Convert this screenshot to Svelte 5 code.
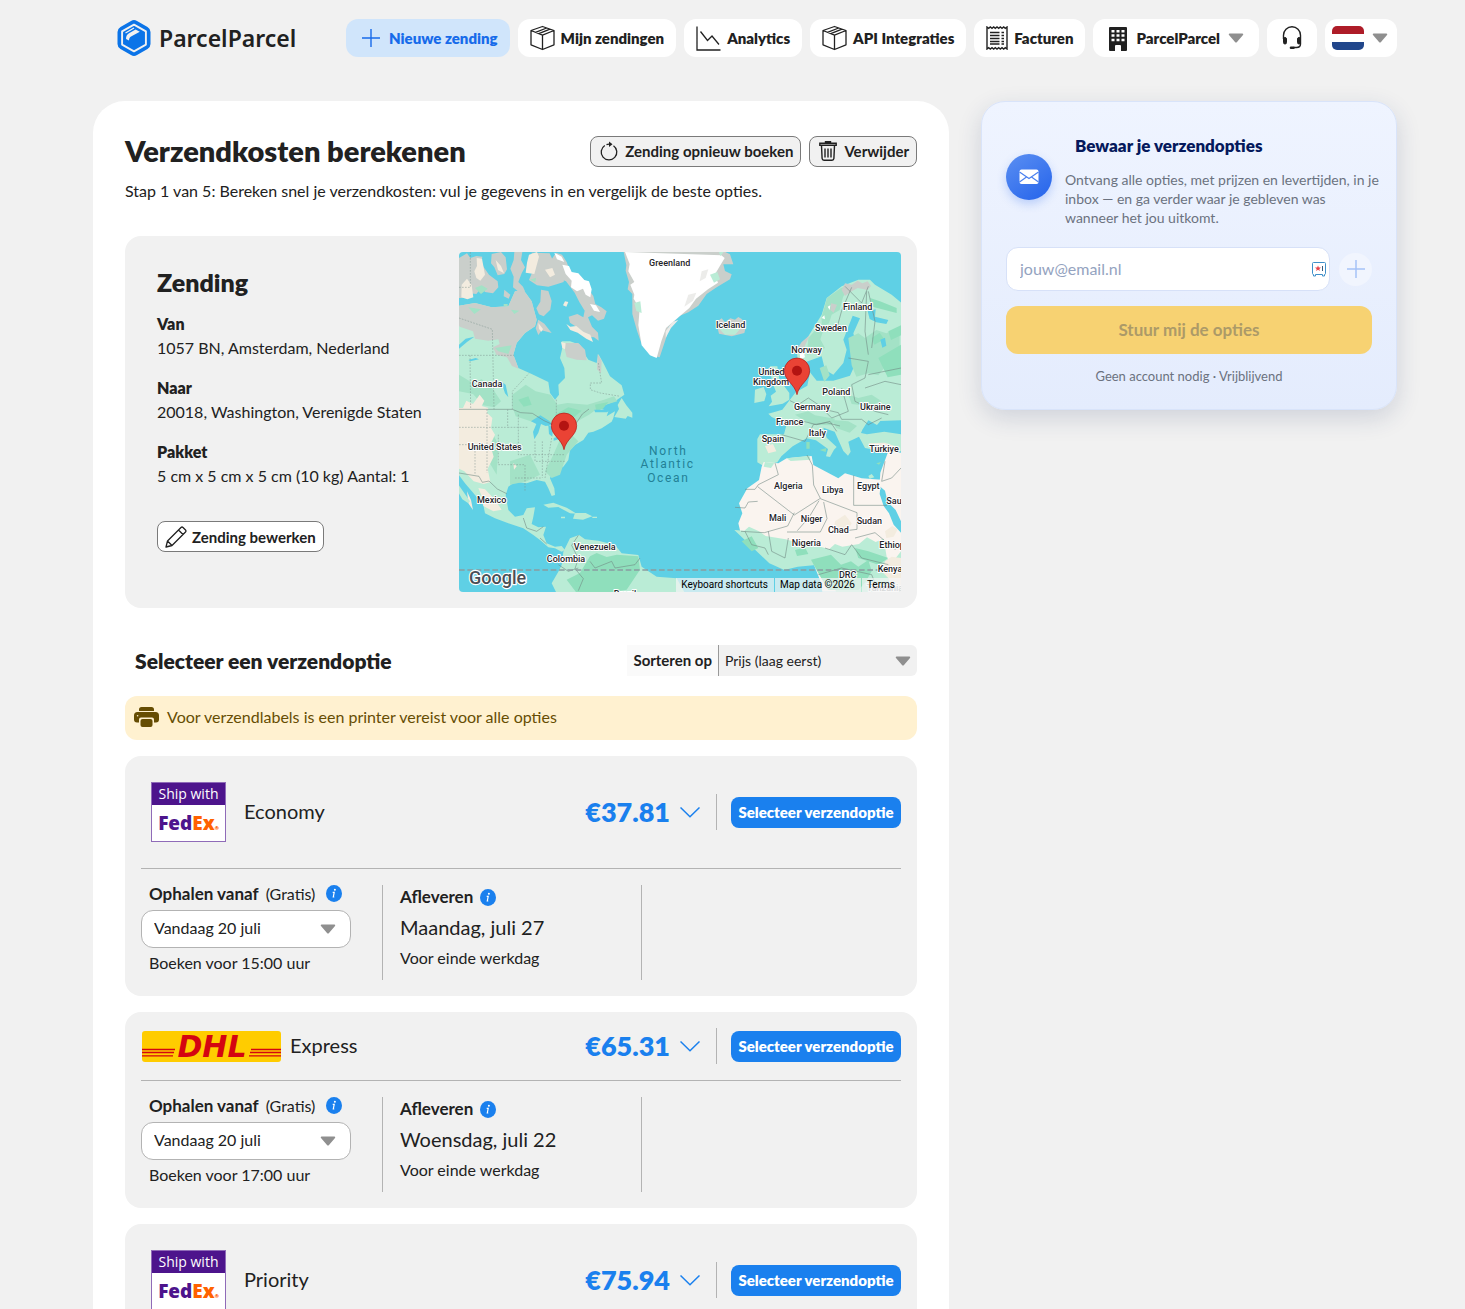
<script lang="ts">
	interface ShippingOption {
		carrier: 'fedex' | 'dhl';
		service: string;
		price: string;
		bookBefore: string;
		delivery: string;
		note: string;
	}

	const options: ShippingOption[] = [
		{
			carrier: 'fedex',
			service: 'Economy',
			price: '€37.81',
			bookBefore: '15:00',
			delivery: 'Maandag, juli 27',
			note: 'Voor einde werkdag'
		},
		{
			carrier: 'dhl',
			service: 'Express',
			price: '€65.31',
			bookBefore: '17:00',
			delivery: 'Woensdag, juli 22',
			note: 'Voor einde werkdag'
		},
		{
			carrier: 'fedex',
			service: 'Priority',
			price: '€75.94',
			bookBefore: '15:00',
			delivery: 'Woensdag, juli 22',
			note: 'Voor einde werkdag'
		}
	];

	const shipment = [
		{ label: 'Van', value: '1057 BN, Amsterdam, Nederland' },
		{ label: 'Naar', value: '20018, Washington, Verenigde Staten' },
		{ label: 'Pakket', value: '5 cm x 5 cm x 5 cm (10 kg) Aantal: 1' }
	];

	// country labels, in map units (3 units per pixel)
	const places: [string, number, number][] = [
		['Greenland', 644, 55],
		['Iceland', 827, 240],
		['Finland', 1208, 187],
		['Sweden', 1128, 250],
		['Norway', 1055, 316],
		['United', 950, 382],
		['Kingdom', 948, 410],
		['Poland', 1144, 442],
		['Germany', 1071, 487],
		['Ukraine', 1261, 487],
		['France', 1004, 532],
		['Italy', 1087, 565],
		['Spain', 954, 583],
		['Türkiye', 1287, 613],
		['Algeria', 1000, 724],
		['Libya', 1133, 736],
		['Egypt', 1240, 724],
		['Saudi', 1328, 768],
		['Mali', 968, 820],
		['Niger', 1070, 823],
		['Sudan', 1243, 828],
		['Chad', 1150, 855],
		['Nigeria', 1054, 895],
		['Ethiopia', 1322, 901],
		['Kenya', 1305, 973],
		['DRC', 1178, 990],
		['Canada', 96, 417],
		['United States', 119, 606],
		['Mexico', 110, 766],
		['Venezuela', 419, 907],
		['Colombia', 333, 943],
		['Brazil', 510, 1046]
	];

	let email = $state('');
	let sort = $state('price');
</script>

{#snippet caret()}
	<svg class="caret" width="16" height="10" viewBox="0 0 16 10" aria-hidden="true">
		<path d="M1.6.5h12.8c.8 0 1.100.8.6 1.400L9 8.900c-.6.7-1.400.7-2 0L1 1.900C.5 1.300.8.5 1.600.5z" fill="#8f8f8f" />
	</svg>
{/snippet}

{#snippet box()}
	<svg width="25" height="26" viewBox="0 0 25 26" fill="none" stroke="#212121" stroke-width="1.300" stroke-linejoin="round" aria-hidden="true">
		<path d="M12.500 1.500 24 5.500v14.300L12.500 24.500 1 19.800V5.500zM1 5.500l11.500 4.600L24 5.500M12.500 10.100v14.400M5.500 7.300l11.200-4.300M8.800 8.600l11.200-4.500" />
	</svg>
{/snippet}

{#snippet info()}
	<svg class="info" width="16" height="17" viewBox="0 0 16 17" role="img" aria-label="Info">
		<ellipse cx="8" cy="8.500" rx="8" ry="8.500" fill="#1a80ee" />
		<circle cx="8.900" cy="4.800" r="1" fill="#fff" />
		<path d="M6.700 7.300h1.500L7.300 12h1" fill="none" stroke="#fff" stroke-width="1.200" />
	</svg>
{/snippet}

{#snippet pin(x: number, y: number)}
	<g transform="translate({x} {y})">
		<path d="M0 0C-6-32-38-42-38-72a38 38 0 0 1 76 0C38-42 6-32 0 0z" fill="#ea4335" stroke="#b31412" stroke-width="2" />
		<circle cy="-72" r="15" fill="#b31412" />
	</g>
{/snippet}

<div class="page">
	<header>
		<a class="brand" href="/">
			<svg width="34" height="36" viewBox="0 0 34 36" aria-hidden="true">
				<path d="M14 .9a6 6 0 0 1 6 0l10.500 6A6 6 0 0 1 33.500 12v12a6 6 0 0 1-3 5.100l-10.500 6a6 6 0 0 1-6 0l-10.500-6a6 6 0 0 1-3-5.100V12a6 6 0 0 1 3-5.100z" fill="#0b74e8" />
				<path d="M17 4.700 28.900 11.400v13.200L17 31.300 5.100 24.600V11.400z" fill="#0b74e8" stroke="#f1f1f1" stroke-width="1.900" stroke-linejoin="round" />
				<path d="M9 19c0-3 1-4.700 3-5.800l6.600-3.700 4.200 2.200-8.300 4.500c-2 1.100-2.300 1.900-2.500 4.300z" fill="#f1f1f1" />
				<path d="m8.500 13 8.500-4.900" stroke="#f1f1f1" stroke-width="1.200" />
			</svg>
			<span>ParcelParcel</span>
		</a>
		<nav>
			<a class="nav-item active" href="#nieuw">
				<svg width="18" height="18" viewBox="0 0 18 18" aria-hidden="true"><path d="M9 0v18M0 9h18" stroke="#176bea" stroke-width="1.400" /></svg>
				Nieuwe zending
			</a>
			<a class="nav-item" href="#zendingen">{@render box()}Mijn zendingen</a>
			<a class="nav-item" href="#analytics">
				<svg width="25" height="25" viewBox="0 0 25 25" fill="none" stroke="#212121" stroke-width="1.300" aria-hidden="true"><path d="M1 .5V24h23.500M4.500 5.500l7 9L16 10l7 8.500" /></svg>
				Analytics
			</a>
			<a class="nav-item" href="#api">{@render box()}API Integraties</a>
			<a class="nav-item" href="#facturen">
				<svg width="22" height="24" viewBox="0 0 22 24" fill="none" stroke="#212121" aria-hidden="true">
					<path d="M1 1l1.700 1.300L4.300 1 6 2.300 7.700 1l1.600 1.300L11 1l1.700 1.300L14.300 1 16 2.300 17.700 1l1.600 1.300L21 1v22l-1.700-1.300-1.600 1.300-1.700-1.300-1.700 1.300-1.600-1.300L11 23l-1.700-1.300L7.700 23 6 21.700 4.300 23l-1.600-1.300L1 23z" stroke-width="1.400" />
					<path d="M4 6.500h9.500M4 9.500h9.500M4 12.500h9.500M4 15.500h9.500M4 18h9.500M15.500 6.500H18M15.500 9.500H18M15.500 12.500H18M15.500 15.500H18M15.500 18H18" stroke-width="1.400" />
				</svg>
				Facturen
			</a>
			<button type="button" class="nav-item account">
				<svg width="20" height="25" viewBox="0 0 20 25" aria-hidden="true">
					<path fill="#212121" fill-rule="evenodd" d="M2 1h16a1 1 0 0 1 1 1v22a1 1 0 0 1-1 1h-5v-5a1 1 0 0 0-1-1H8a1 1 0 0 0-1 1v5H2a1 1 0 0 1-1-1V2a1 1 0 0 1 1-1zm1.500 3v2.500h3V4zm5 0v2.500h3V4zm5 0v2.500h3V4zm-10 4.300v2.500h3V8.300zm5 0v2.500h3V8.300zm5 0v2.500h3V8.300zm-10 4.400v2.500h3v-2.500zm5 0v2.500h3v-2.500zm5 0v2.500h3v-2.500z" />
				</svg>
				ParcelParcel
				{@render caret()}
			</button>
			<button type="button" class="nav-item support" aria-label="Klantenservice">
				<svg width="20" height="24" viewBox="0 0 20 24" fill="none" stroke="#212121" aria-hidden="true">
					<path d="M1.500 13V9.200a8.500 8.500 0 0 1 17 0V18c0 2.500-1.500 3.500-4 3.500h-3" stroke-width="1.400" />
					<rect x="1.500" y="11.500" width="3" height="6.500" rx="1.500" fill="#212121" />
					<rect x="15.500" y="11.500" width="3" height="6.500" rx="1.500" fill="#212121" />
					<path d="M9 21.700h2.500" stroke-width="2.600" stroke-linecap="round" />
				</svg>
			</button>
			<button type="button" class="nav-item language" aria-label="Taal">
				<svg width="32" height="24" viewBox="0 0 32 24" aria-hidden="true">
					<clipPath id="flag"><rect width="32" height="24" rx="5" /></clipPath>
					<g clip-path="url(#flag)">
						<path fill="#fff" d="M0 0h32v24H0z" />
						<path fill="#ae1c28" d="M0 0h32v8H0z" />
						<path fill="#21468b" d="M0 16h32v8H0z" />
					</g>
				</svg>
				{@render caret()}
			</button>
		</nav>
	</header>

	<div class="columns">
		<main>
			<div class="heading">
				<h1>Verzendkosten berekenen</h1>
				<div class="actions">
					<button type="button" class="small-btn">
						<svg width="18" height="20" viewBox="0 0 18 20" fill="none" stroke="#212121" stroke-width="1.300" aria-hidden="true">
							<path d="M4.800 4.500A7.800 7.800 0 1 0 13.500 4.700M10 3.200Q8 3 6.500 3.600" />
							<path d="M9 .5l3.500 2.700L9 6z" fill="#212121" stroke="none" />
						</svg>
						Zending opnieuw boeken
					</button>
					<button type="button" class="small-btn">
						<svg width="18" height="20" viewBox="0 0 18 20" fill="none" stroke="#212121" stroke-width="1.400" aria-hidden="true">
							<path d="M6.500 2V.8h5V2M.8 2.300h16.400v2H.8zM2.500 4.500l.6 13a2 2 0 0 0 1.900 1.800h8a2 2 0 0 0 1.900-1.800l.6-13M6 7.500v9M9 7.500v9M12 7.500v9" />
						</svg>
						Verwijder
					</button>
				</div>
			</div>
			<p class="intro">Stap 1 van 5: Bereken snel je verzendkosten: vul je gegevens in en vergelijk de beste opties.</p>

			<section class="shipment">
				<div class="summary">
					<h2>Zending</h2>
					<dl>
						{#each shipment as row}
							<div>
								<dt>{row.label}</dt>
								<dd>{row.value}</dd>
							</div>
						{/each}
					</dl>
					<button type="button" class="small-btn edit">
						<svg width="22" height="22" viewBox="0 0 22 22" fill="none" stroke="#212121" stroke-width="1.300" stroke-linejoin="round" aria-hidden="true">
							<path d="M1 21l1.500-6L16 1.500a1.500 1.500 0 0 1 2 0L20.500 4a1.500 1.500 0 0 1 0 2L7 19.500zM13.500 4l4.500 4.500M2.500 15 7 19.500" />
						</svg>
						Zending bewerken
					</button>
				</div>

				<div class="map">
					<svg viewBox="12 12 1326 1020" preserveAspectRatio="xMidYMid slice" role="img" aria-label="Kaart">
						<path fill="#5fd0e5" d="M0 0h1350v1040H0z" />

						<!-- North America -->
						<path fill="#baecd6" d="M0 175 60 165l50 13 50-3 20-45 25-5 25 35 15 55-5 20-30 20-25 30-10 35 15 40 40 18 50 24 5 33 15 20 12-15-2-30 20-20-2-30-13-30 7-30-2-20h25l30 10 15 30 10 15 25 10 5-27 15 27 20 40 35 27 8 28-28 20-40 15-25 5-20 20 35-20 30 10-5 15 25-15-5 20-5 11-30 20-25 10-15 3-15 22-25 15-15 15-5 30-15 20-35 20-5 15 13 30 2 20-10 3-10-23-10-20-25-5-30 10-35-5-20 15-8 25 8 45 20 20 25-5 10-20 25-3-5 28-5 22 20 10 23-2-8 25 10 25 25 10 20-2 10 12-10 5-20-10-20-3-25-22-20-15-30-20-45-15-40-15-30-15-5-25-25-30-30-35L0 665z" />
						<path fill="#cacfcb" d="M0 175l60-10 50 13 50-3 20-45 25-5 25 35 15 55-5 20-30 20-25 30-10 35 16 42-20-8-15-26-32-8-10-22 20-10-4-14-30 4-40-6-6-22-40-14L0 205zM325 285l45 0 20 20 5 32-30-2-30-8zM428 318l12 20-2 38-12-12z" />
						<path fill="#a3e2c6" d="M172 440l40-30 30 20 45 10 20 30 30-5 60 5 50-15 30-10 10 15-50 15-35 25-35 20-25 25-55-20-60-5-45-15-10-30zM12 380l40 24 28-10 34 30 24 36-20 18-34-6-30-34-42-8zM330 540l20 20 20 20-35 40-20 60-25 10-20-20 25-50zM100 530l30 60-5 90-30-50zM165 640l60-20 30 60-40 20-50 10z" />
						<path fill="#8fdfbc" d="M190 455l30-10 10 25-24 6zM300 500l40-22 40 10-30 26-30 12zM420 470l40-8-16 20-20 8z" />
						<path fill="#f3ecdf" d="M24 480l10-22 20 10 20-28 14 18-8 16 20 6-4 14 16 16-4 30 12 20-14 30 10 36-18 36 8 40-20 6-30-8-28-30-16-8V480zM70 720l20 4 30 31 20 30-25 5-30-16-5-30zM175 645l10 10-8 10zM36 730l12 26 6 30-14-20z" />
						<path fill="#baecd6" d="M0 695l45 65-5 6-18-12L0 715zM500 450l14 22 18 22 0 15-14-5-6 8-34-5 14-24-4-12zM265 770l30-6 40 15 30 18-20-1-35-19-30 2zM360 795l32 0 20 10-28 10-30-3zM318 806h12v5h-12zM412 806h14v4h-14z" />

						<!-- Arctic islands -->
						<path fill="#cacfcb" d="M12 30l24-14 10 14 18-6 18 2-4 20 24 34 26 20 2 18-16 18-24-4-10-14-16 20-20-2-22 14H12zM110 18l28-6 14 16 4 36-8 14-20 4-10-24-10-12zM178 12h24l-4 24 12 22-10 18-10 26 14 14 6 14-18 2-18-14 2-32-10-24 10-26zM148 125l18 15-5 12-15-7zM230 14l54 2 12 26 8 22 24 14-2 24-26 8-20 6-34-4-24-16 10-24zM258 125l22 4 10 30-4 26-20 20-14-6-8-18 12-20zM250 215l18 12 22 28-30-8-10 14-8-20zM303 14l18 6 14 22 10 28 18 14 24 20 28 40 6 24 18 10 16 12-8 22-18 6-18-16-12 6 12 28 18 18 2 24-14-10-18-2-24-22-30-20-4-18 26-8 18 10 4-20-16-26-14-28-26-34-34-14-18-26 5-20z" />
						<path fill="#f3ecdf" d="M20 110l16-18 14 20 5 36-18 6-18-6zM65 30l16 2 9 48-14 18-12-8-6-20 8-16zM122 36l16 18 9 22-18-10zM222 20l24-8 6 14-14 52-26-4 4-30zM270 65l22-5 8 20-15 8zM330 160l10 2-6 14-10-4zM250 225l14 18-4 8-8-8zM318 282l14 4-2 18-8-4zM334 228l12 8 18-2 22 18 20 8 8 22-20-10-26-18-22-8z" />
						<path fill="#fff" d="M298 14l22 12 8 16-22-8zM322 50l20 4 8 18 20 4 18 20 14 4 8 24-4 24-14-8-8-18-18 8-18-12 2-20-18-20zM405 168l18 4 12 20-18-4z" />
						<path fill="#a3e2c6" d="M60 120l20-8 18 10-20 16zM225 95l18-6-2 14zM168 185l25 3-15 10zM40 178l38 6-20 14zM120 300l50-8-10 26-30-8zM146 168h12v6h-12z" />
						<path fill="#5fd0e5" d="M12 290l20-18 26-6-22 16-24 20zM138 400l14 10 8 38-10-12zM100 155l10-14 6 14zM40 336l22-6 10 4-26 6z" />
						<path fill="#5fd0e5" d="M228 520l28-18 26 16 12 12-22 4-14-6-8 26-12 20-4-22 10-24zM280 532l14 6-2 28-10-8zM296 570l28-8-8 10-20 6zM418 485l48 0-10 8-36 0z" />

						<!-- Greenland and Iceland -->
						<path fill="#cacfcb" d="M506 12l8 40-2 16 10 34-4 22 14 14 0 60 14 50 14 40 32 36 22 4 20-60 6-30 35-35 25-10 30-20 25-35 30-20 40-24 5-15-20-10-5-20 30 0-10-30-20-10 45-23z" />
						<path fill="#fff" d="M510 12l14 36-4 22 18 32-12 8 12 30-2 12 18 30-4 50 10 60 25 30 20 8 14-50 14-40 25-22 45-38 20-28 36-28 30-20-10-24 30-50-10-8z" />
						<path fill="#ececea" d="M700 140l24-6-10 24-26 18zM740 70l20-6-8 26-18 10zM632 250l20-28 18-6-22 24-16 30z" />
						<path fill="#baecd6" d="M538 165l18-5 4 35-16-6zM765 80l22-8 8 22-18 10zM792 12l14 0-10 12z" />
						<path fill="#cacfcb" d="M782 217l10 0 8-6 10 12 16-12 14 4 10-8 10 6 14 18-6 24-38 10-38-8z" />
						<path fill="#baecd6" d="M790 240l66 2-16 18-30 0z" />

						<!-- Europe -->
						<path fill="#baecd6" d="M1030 350l-5-40 35-45 40-65 15-50 45-35 50-20 35 0 15 15 50 30 30 25V610h-60l-50-10-18-34-32 15 7 30-8 12-14-14-26-58-34-12 10 30 30 28-8 8-12 22-12-2 6-22-36-26-28-6-42 24-34 30-12 18-40 12-20-12 0-70 8-14h72l8-30-45-22-10-10 42-12 40-52 35-20 8-40 20 25 50 0 50-15 20-45-10-20 50-12-40-10-10-40 20-45-22-8-28 72 10 30-10 40-30 35-25-15-10-40z" />
						<path fill="#a3e2c6" d="M1100 206l16-56 42-30 22-6-16 34-10 38-24 14-8 26-22 12zM1060 270l30-34 16 8-10 30 14 26-24 14-30 6zM1094 360l20-8 10 30-16 20zM1180 270l30-14 20 14 34-24 30 10 40-18v100l-40 14-24 30-30-6-36 10-14-34zM1020 500l40-10 20 12 60 10-10 20-60-2zM1130 516l50 4 26 14-22 20-40-14zM1180 440l30 10 40-10 30 20-40 14-50-6z" />
						<path fill="#8fdfbc" d="M1245 150l30 10 50 20 0 15-70-18zM1270 330l68-40v90l-40 8zM1250 270l24-16 14 20-30 16zM1300 250l38-18v30l-30 14z" />
						<path fill="#cacfcb" d="M1160 126l10-20 20 4 18-12 14 8 16-6 10 14-10 12-30-6-22 12-16 12zM1020 312l20-30 24-20-20 44zM938 360l18-2-4 14zM1128 166l18 4-10 24-10-8z" />
						<path fill="#fff" d="M1034 316l12-6 4 18-14 6zM1100 210l8-8 2 12zM1118 176l8-4-2 14z" />
						<path fill="#baecd6" d="M945 355l22 0 6 40 30 40 0 20-20 12-42 8 10-14-4-18 16-12-12-30zM900 425l26-8 8 22-6 20-30 6z" />
						<path fill="#5fd0e5" d="M1238 190l24-6-2 22 40 10-6 12-30-5-20-10zM1222 545l18-28 26 14 10-12 62-2v42l-50-8-52 8-18-4zM1276 275l14-6 4 24-12 6zM1064 592l12-6 2 20-12-2zM1066 630h10v-24h-10z" />
						<path fill="#8fdfbc" d="M1054 582h10v20h-10zM1094 606l20-6-2 12zM1264 646l14-4-6 8z" />
						<path fill="#f3ecdf" d="M930 594l24-6 10 22-24 6zM1240 586l50-2 40 14-14 10-60-6z" />

						<!-- Africa and Middle East -->
						<path fill="#faf4ef" d="M1300 610l38 4v240l-20-20-28-70-16-60 2-30zM926 642l44 4 25-15 75-7 5 27 75 40 20-15 50 15 60 4 5 22 2 10 18 34 25 70 20 30v170h-248l-5-30-20-50 0-25-25-10-25-15-55 5-40 10-45-20-30-40-7-30 12-30-10-30 25-45 35-25 8-40z" />
						<path fill="#5fd0e5" d="M1276 716l14 12 8 34 24 24 16 34v34l-22-24-14-34-16-22-12-36z" />
						<path fill="#baecd6" d="M930 642l28 4-10 14-22-4zM995 631l68-8 4 12-60 4zM838 846l30 2 14-12 30 14 20 14 60 10 40 12 50 6 40 12 18-16 22 8 50-8 24-20 26 14 24-10 10 60 20 6 22-28 20 10v36l-60 50-30 50h-115l-20-50 0-30-25-10-25-15-55 5-40 10-45-20zM1240 684l10-6 8 10-14 4z" />
						<path fill="#8fdfbc" d="M1068 935l60-15 30 30 30-10 22 16 30-20 10 34-20 34-20 22h-90l-30-50zM860 880l30-15 20 35-20 10zM1200 900l40 10 60 20-30 20-60-20zM1020 906l30-8 10 20-34 6z" />
						<path fill="#f3ecdf" d="M1290 940l20-14 28 4v102h-40l4-40-20-20zM1140 820l30-20 20 26-14 24-40-6zM1290 850l22-16 16 10-12 22-22 4z" />

						<!-- South America -->
						<path fill="#baecd6" d="M325 911l20-40 27-10 18 13 40 4 50 13 20 25 50 5 10 35 45 30 60 5 25 45H305l-15-30 20-35 10-20z" />
						<path fill="#8fdfbc" d="M405 925l20-10 30 12 30-7 65 5 5 40-40 60-60 10-90 0-30-40 40-20z" />

						<!-- borders -->
						<g fill="none" stroke="#6f8681" stroke-width="1.700">
							<path d="M12 484h160l25 10 35 2 35 22 45 20 30 20 40-60 20-15M12 675l60 10 10 18 20-4 25 24 28 14M205 810l10 30 30 10 20-14M255 870l20 18M370 862l-20 30 20 40-10 30 25 30-15 36M405 940l15 20 50-20 10 20 60-10 15-20M310 950l30 20 30-10" />
							<path d="M1190 118l-30 70-15 55M1170 115l50 50 20-50M1240 130l20 90-10 80M1235 130l-5 120 10 70M1180 330l60 10-10 50-40 20 10 50 60 30 40 10M1160 420l20 70-50 20-40-40-30-20-30 20-25-12M1090 480l60 14 10 20 60 0 20 16 40-20M980 560l70 20 25-50 40-6 40 10M1045 520l40 10 40-10 20 30M1230 420l60-20 48 10M1240 380l98-20" />
							<path d="M960 645l10 35-60 30-10 14h-30M908 716l110 85 78-50-20-40-4-60-16-30M1018 794l-20 40-70 20-70-4M1092 758l-30 50-35 40M1096 752l110 42 0 50-80 10M1196 682v90h100M1106 762l10 50-20 40-100 0M840 778l30 2 10-18 28-2M1200 870l60-16 60 50 18-10M1110 900l60 20 20-30 30 40 80 20M940 850l10 60 40 20 10-60M870 850l20 40 40 10 10 20M1290 640l-10 60 30-10 28-30M1090 980l70-20 90 20 20 50" />
						</g>
						<path fill="none" stroke="#7d938d" stroke-width="1.500" stroke-dasharray="5 4" d="M12 210l100 34 5 240M12 322h165M45 322l2 160M172 484v-54l50-54M304 455v60M46 12v106h-34M96 484v190M158 484v54h60M12 538h146M12 590h190M190 500v120h140M60 600v80M130 560v90h80v80M240 580v60h90M262 580v110M290 570l-20 120M180 690h80M430 345l10 60-34 0 0 20 30 10 60 10" />
						<path fill="none" stroke="#8b9ca0" stroke-width="4" stroke-dasharray="17 8" d="M12 966h1326" />

						<g class="ocean">
							<text x="640" y="620">North</text>
							<text x="638" y="661">Atlantic</text>
							<text x="640" y="702">Ocean</text>
						</g>
						<g class="places">
							{#each places as [name, x, y]}
								<text {x} {y}>{name}</text>
							{/each}
							<text class="faint" x="1290" y="1029">Tanzania</text>
						</g>
						{@render pin(327, 605)}
						{@render pin(1026, 440)}
						<text class="google" x="42" y="1008">Google</text>
					</svg>
					<div class="map-legal">
						<span>Keyboard shortcuts</span>
						<span>Map data ©2026</span>
						<a href="#terms">Terms</a>
					</div>
				</div>
			</section>

			<div class="options-head">
				<h3>Selecteer een verzendoptie</h3>
				<div class="sort">
					<label for="sort">Sorteren op</label>
					<div class="select">
						<select id="sort" bind:value={sort}>
							<option value="price">Prijs (laag eerst)</option>
							<option value="speed">Snelheid</option>
						</select>
						{@render caret()}
					</div>
				</div>
			</div>

			<div class="notice">
				<svg width="25" height="20" viewBox="0 0 25 20" fill="#664d03" aria-hidden="true">
					<path d="M7.500 0h10a2.500 2.500 0 0 1 2.500 2.500V4H5V2.500A2.500 2.500 0 0 1 7.500 0z" />
					<path d="M3.500 5h18A3.500 3.500 0 0 1 25 8.500v4a3 3 0 0 1-3 3h-2V12.500a2 2 0 0 0-2-2H7a2 2 0 0 0-2 2v3H3a3 3 0 0 1-3-3v-4A3.500 3.500 0 0 1 3.500 5z" />
					<rect x="6.500" y="12" width="12" height="8" rx="2" />
					<circle cx="3.600" cy="8.700" r=".8" fill="#fff1d0" />
				</svg>
				<span>Voor verzendlabels is een printer vereist voor alle opties</span>
			</div>

			{#each options as option, i}
				<article class="option">
					<div class="option-top">
						{#if option.carrier === 'fedex'}
							<div class="fedex">
								<span class="ship">Ship with</span>
								<span class="fedex-name"><b>Fed</b><b class="ex">Ex</b><small>®</small></span>
							</div>
						{:else}
							<svg class="dhl" width="139" height="31" viewBox="0 0 139 31" role="img" aria-label="DHL">
								<rect width="139" height="31" rx="3" fill="#fc0" />
								<path d="M0 18.500h33M0 21.500h32M0 24.800h31M109 18.500h30M108 21.500h31M107 24.800h32" stroke="#d40511" stroke-width="1.300" />
								<text x="70" y="26" text-anchor="middle">DHL</text>
							</svg>
						{/if}
						<span class="service">{option.service}</span>
						<button type="button" class="price">
							{option.price}
							<svg width="20" height="11" viewBox="0 0 20 11" fill="none" stroke="#1a80ee" stroke-width="1.500" aria-hidden="true"><path d="M.5.5 10 9.700 19.500.5" /></svg>
						</button>
						<div class="choose">
							<button type="button">Selecteer verzendoptie</button>
						</div>
					</div>
					<div class="option-body">
						<div class="pickup">
							<div class="label-row">
								<label for="pickup-{i}">Ophalen vanaf</label>
								<span>(Gratis)</span>
								{@render info()}
							</div>
							<div class="select">
								<select id="pickup-{i}">
									<option>Vandaag 20 juli</option>
								</select>
								{@render caret()}
							</div>
							<p>Boeken voor {option.bookBefore} uur</p>
						</div>
						<div class="delivery">
							<div class="label-row"><strong>Afleveren</strong>{@render info()}</div>
							<p class="date">{option.delivery}</p>
							<p>{option.note}</p>
						</div>
					</div>
				</article>
			{/each}
		</main>

		<aside>
			<div class="save-head">
				<div class="mail">
					<svg width="20" height="16" viewBox="0 0 20 16" aria-hidden="true">
						<rect x=".5" y=".5" width="19" height="14.500" rx="2" fill="#fff" />
						<path d="M.5 3 10 9.500 19.500 3M.5 13l7-5M19.500 13l-7-5" fill="none" stroke="#4a80ef" stroke-width="1.200" />
					</svg>
				</div>
				<div class="save-text">
					<h4>Bewaar je verzendopties</h4>
					<p>Ontvang alle opties, met prijzen en levertijden, in je inbox — en ga verder waar je gebleven was wanneer het jou uitkomt.</p>
				</div>
			</div>
			<div class="email-row">
				<div class="email">
					<input type="email" placeholder="jouw@email.nl" aria-label="E-mailadres" bind:value={email} />
					<svg width="14" height="15" viewBox="0 0 14 15" fill="none" stroke="#3f8fc9" aria-hidden="true">
						<path d="M1.500.5h11a1 1 0 0 1 1 1v10a1 1 0 0 1-1 1v1.500h-2V12.500h-7V14h-2v-1.500a1 1 0 0 1-1-1v-10a1 1 0 0 1 1-1z" />
						<path d="M10.500 4v5" stroke="#35597a" />
						<path d="m6 3.500.8 2 2.200.1-1.700 1.300.6 2.100L6 7.800 4.100 9l.6-2.100L3 5.600l2.200-.1z" fill="#e8404a" stroke="none" />
					</svg>
				</div>
				<button type="button" class="add" aria-label="E-mailadres toevoegen" disabled>
					<svg width="18" height="18" viewBox="0 0 18 18" aria-hidden="true"><path d="M9 0v18M0 9h18" stroke="#a5c2f7" stroke-width="1.500" /></svg>
				</button>
			</div>
			<button type="button" class="send" disabled>Stuur mij de opties</button>
			<p class="fine">Geen account nodig · Vrijblijvend</p>
		</aside>
	</div>
</div>

<style>
	:global(body) {
		background: #f1f1f1;
		color: #212121;
		font: 16px/24px Lato, sans-serif;
	}

	.page,
	.page :global(*) {
		box-sizing: border-box;
	}

	.page {
		padding: 19px 68px 0 93px;
	}

	h1,
	h2,
	h3,
	h4,
	p,
	dl,
	dd {
		margin: 0;
	}

	button,
	select,
	input {
		font: inherit;
		color: inherit;
	}

	button {
		padding: 0;
		border: none;
		background: none;
		cursor: pointer;
	}

	svg {
		flex-shrink: 0;
	}

	header {
		display: flex;
		align-items: center;
		justify-content: space-between;
		padding-left: 24px;
		margin-bottom: 44px;
	}

	.brand {
		display: flex;
		align-items: center;
		gap: 8px;
		color: #212121;
		font: 600 23px/36px 'Noto Sans', sans-serif;
		text-decoration: none;
	}

	nav {
		display: flex;
		gap: 8px;
	}

	.nav-item {
		display: flex;
		align-items: center;
		gap: 6px;
		height: 38px;
		padding: 0 12px;
		border-radius: 12px;
		background: #fff;
		color: #212121;
		font-size: 15px;
		font-weight: 800;
		text-decoration: none;
		white-space: nowrap;
	}

	.nav-item.active {
		gap: 9px;
		padding: 0 12px 0 16px;
		background: #d0e5fb;
		color: #176bea;
	}

	.nav-item.account {
		gap: 8px;
		padding: 0 15px;
	}

	.nav-item.support {
		padding: 0 15px;
	}

	.nav-item.language {
		gap: 8px;
		padding: 0 9px 0 7px;
	}

	.columns {
		display: grid;
		grid-template-columns: minmax(0, 1fr) 416px;
		align-items: start;
		gap: 32px;
	}

	main {
		padding: 32px;
		border-radius: 32px 32px 0 0;
		background: #fff;
	}

	.heading {
		display: flex;
		align-items: center;
		justify-content: space-between;
		height: 36px;
	}

	h1 {
		font-size: 29px;
		font-weight: 800;
		line-height: 34px;
	}

	.actions {
		display: flex;
		gap: 8px;
	}

	.small-btn {
		display: flex;
		align-items: center;
		gap: 7px;
		height: 31px;
		padding: 0 7px 0 9px;
		border: 1px solid #7a7a7a;
		border-radius: 8px;
		background: #f1f1f1;
		font-size: 15px;
		font-weight: 700;
		white-space: nowrap;
	}

	.intro {
		margin: 10px 0 33px;
	}

	.shipment {
		display: flex;
		justify-content: space-between;
		gap: 16px;
		padding: 16px 16px 16px 32px;
		border-radius: 16px;
		background: #f1f1f1;
	}

	h2 {
		margin: 14px 0 14px;
		font-size: 25px;
		font-weight: 800;
		line-height: 32px;
	}

	dl div {
		margin-bottom: 16px;
	}

	dt {
		font-weight: 800;
	}

	.edit {
		margin-top: 33px;
		padding: 0 7px;
		gap: 5px;
		background: #fff;
	}

	.map {
		position: relative;
		flex: 0 1 442px;
		height: 340px;
		border-radius: 4px;
		overflow: hidden;
	}

	.map > svg {
		display: block;
		width: 100%;
		height: 100%;
	}

	.map text {
		font-family: Roboto, sans-serif;
		text-anchor: middle;
	}

	.places text {
		font-size: 27px;
		font-weight: 500;
		fill: #1f2429;
		stroke: #fff;
		stroke-width: 6px;
		stroke-linejoin: round;
		paint-order: stroke;
	}

	.places .faint {
		fill: #8a9094;
	}

	.ocean text {
		font-size: 36px;
		letter-spacing: 5px;
		fill: #238096;
	}

	.map .google {
		font-size: 54px;
		font-weight: 500;
		text-anchor: start;
		fill: #4a4f55;
		stroke: #fff;
		stroke-width: 7px;
		paint-order: stroke;
	}

	.map-legal {
		position: absolute;
		right: 0;
		bottom: 0;
		display: flex;
		gap: 1px;
		font: 10px/14px Roboto, sans-serif;
		color: #000;
	}

	.map-legal > * {
		padding: 0 6px 0 5px;
		background: rgba(245, 245, 245, 0.7);
		color: inherit;
		text-decoration: none;
	}

	.options-head {
		display: flex;
		align-items: center;
		justify-content: space-between;
		margin: 37px 0 20px;
		padding-left: 10px;
	}

	h3 {
		font-size: 21px;
		font-weight: 800;
	}

	.sort {
		display: flex;
		font-size: 14px;
		line-height: 31px;
	}

	.sort label {
		padding: 0 6px;
		background: #fafafa;
		font-size: 15px;
		font-weight: 700;
	}

	.select {
		display: grid;
		align-items: center;
	}

	.select select {
		grid-area: 1 / 1;
		width: 100%;
		appearance: none;
	}

	.select :global(.caret) {
		grid-area: 1 / 1;
		justify-self: end;
		margin-right: 15px;
		pointer-events: none;
	}

	.sort .select {
		width: 199px;
	}

	.sort .select :global(.caret) {
		margin-right: 6px;
	}

	.sort select {
		height: 31px;
		padding: 0 6px;
		border: none;
		border-left: 1px solid #999;
		border-radius: 0 6px 6px 0;
		background: #f1f1f1;
	}

	.notice {
		display: flex;
		align-items: center;
		gap: 8px;
		height: 44px;
		padding: 0 9px 2px;
		border-radius: 12px;
		background: #fff1d0;
		color: #664d03;
	}

	.option {
		margin-top: 16px;
		padding: 16px;
		border-radius: 16px;
		background: #f1f1f1;
	}

	.option-top {
		display: flex;
		align-items: center;
		min-height: 36px;
		padding-bottom: 16px;
		border-bottom: 1px solid #b3b3b3;
	}

	.fedex {
		width: 75px;
		height: 60px;
		margin: 10px;
		border: 1px solid #8f6bb8;
		background: #fff;
		text-align: center;
	}

	.fedex span {
		display: block;
	}

	.fedex .ship {
		background: #4d148c;
		color: #fff;
		font: 14px/22px 'Open Sans', sans-serif;
	}

	.fedex-name {
		font: 800 19px/36px 'Open Sans', sans-serif;
		color: #4d148c;
	}

	.fedex-name b {
		font-weight: 800;
	}

	.fedex-name .ex,
	.fedex-name small {
		color: #ff6200;
	}

	.fedex-name small {
		font-size: 5px;
	}

	.dhl {
		margin: 0 1px;
	}

	.dhl text {
		font: italic bold 30px 'DejaVu Sans', sans-serif;
		fill: #d40511;
	}

	.service {
		flex: 1;
		padding: 0 0 2px 8px;
		font-size: 20px;
	}

	.price {
		display: flex;
		align-items: center;
		gap: 10px;
		margin-right: 16px;
		color: #1a80ee;
		font-size: 27px;
		font-weight: 800;
		line-height: 36px;
	}

	.choose {
		display: flex;
		align-items: center;
		height: 36px;
		padding-left: 14px;
		border-left: 1px solid #b3b3b3;
	}

	.choose button {
		width: 170px;
		height: 31px;
		border-radius: 8px;
		background: #1a80ee;
		color: #fff;
		font-size: 15px;
		font-weight: 800;
	}

	.option-body {
		display: flex;
		height: 95px;
		margin-top: 16px;
	}

	.label-row {
		display: flex;
		align-items: center;
		gap: 7px;
	}

	.pickup {
		width: 242px;
		padding-right: 31px;
		border-right: 1px solid #b3b3b3;
	}

	.pickup .label-row {
		height: 17px;
		margin-bottom: 8px;
		padding-left: 8px;
	}

	.pickup .label-row :global(.info) {
		margin-left: 4px;
	}

	.pickup label,
	.label-row strong {
		font-size: 17px;
		font-weight: 700;
	}

	.pickup select {
		height: 38px;
		padding: 0 12px 2px;
		border: 1px solid #b3b3b3;
		border-radius: 12px;
		background: #fff;
	}

	.pickup p {
		padding: 3px 8px 0;
	}

	.delivery {
		width: 259px;
		padding-left: 17px;
		border-right: 1px solid #b3b3b3;
	}

	.delivery .date {
		margin: 4px 0 5px;
		font-size: 20px;
		line-height: 28px;
	}

	aside {
		padding: 32px 24px 21px;
		border: 1px solid #d9e4fa;
		border-radius: 24px;
		background: linear-gradient(#eff4ff, #e4ecfd);
		box-shadow: 0 8px 24px rgba(30, 50, 100, 0.16);
	}

	.save-head {
		display: flex;
		gap: 13px;
		align-items: center;
	}

	/* the text may run a little into the card's padding */
	.save-text {
		margin-right: -8px;
	}

	.mail {
		display: flex;
		align-items: center;
		justify-content: center;
		flex: 0 0 46px;
		height: 46px;
		margin-bottom: 8px;
		border-radius: 50%;
		background: linear-gradient(145deg, #5b8ff2, #2463eb);
		box-shadow: 0 4px 10px rgba(37, 99, 235, 0.25);
	}

	h4 {
		padding-left: 10px;
		margin-bottom: 12px;
		color: #05195c;
		font-size: 17px;
		font-weight: 800;
	}

	.save-head p {
		color: #6b7280;
		font-size: 14px;
		line-height: 19px;
	}

	.email-row {
		display: flex;
		align-items: center;
		gap: 9px;
		margin: 20px 0 15px;
	}

	.email {
		display: grid;
		flex: 1;
		align-items: center;
	}

	.email input {
		grid-area: 1 / 1;
		width: 100%;
		height: 44px;
		padding: 0 13px 2px;
		border: 1px solid #d7e1f8;
		border-radius: 12px;
		background: #fff;
	}

	.email input::placeholder {
		color: #94a3c0;
	}

	.email svg {
		grid-area: 1 / 1;
		justify-self: end;
		margin-right: 4px;
	}

	.add {
		display: flex;
		align-items: center;
		justify-content: center;
		width: 33px;
		height: 33px;
		border-radius: 50%;
		background: #f1f5fe;
	}

	.send {
		width: 100%;
		height: 48px;
		border-radius: 12px;
		background: #f7d272;
		color: #ac9a68;
		font-size: 17px;
		font-weight: 700;
	}

	.fine {
		margin-top: 10px;
		color: #6b7280;
		font-size: 13px;
		text-align: center;
	}
</style>
